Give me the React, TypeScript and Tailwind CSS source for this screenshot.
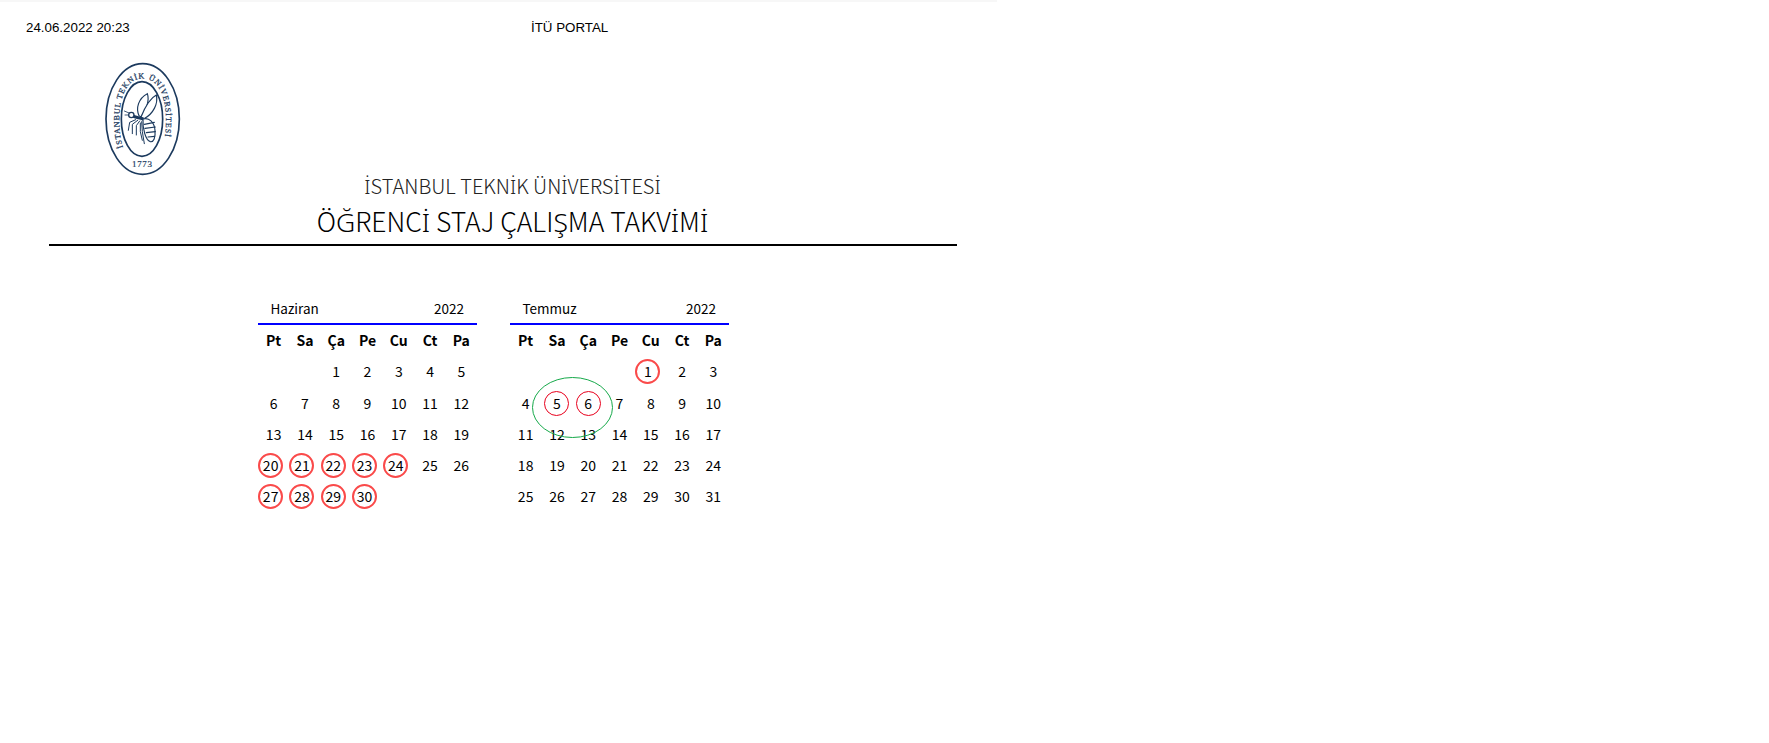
const pageFont = '"Noto Sans CJK JP", "Noto Sans", sans-serif';
const navy = "#1c3a5e";

type Mark = "red" | "thin";

type Month = {
  name: string;
  lead: number;
  days: number;
  marks: Record<number, Mark>;
};

const dayNames = ["Pt", "Sa", "Ça", "Pe", "Cu", "Ct", "Pa"];

const months: Month[] = [
  {
    name: "Haziran",
    lead: 2,
    days: 30,
    marks: { 20: "red", 21: "red", 22: "red", 23: "red", 24: "red", 27: "red", 28: "red", 29: "red", 30: "red" },
  },
  {
    name: "Temmuz",
    lead: 4,
    days: 31,
    marks: { 1: "red", 5: "thin", 6: "thin" },
  },
];

// the CJK font has no dotted capital I, so that one letter comes from Noto Sans
function Dotted({ text }: { text: string }) {
  const parts = text.split("İ");
  return (
    <>
      {parts.map((p, i) => (
        <span key={i}>
          {i > 0 && <span className="font-['Noto_Sans',sans-serif] font-light">İ</span>}
          {p}
        </span>
      ))}
    </>
  );
}

function Logo() {
  return (
    <svg width="140" height="150" viewBox="0 0 420 450" fill="none" className="block">
      <ellipse cx="191" cy="237" rx="110" ry="166" stroke={navy} strokeWidth="5" />
      <ellipse cx="189" cy="237" rx="62" ry="112" stroke={navy} strokeWidth="5" />
      <defs>
        {/* drawn as two halves so the arc's length is easy to reason about */}
        <path id="seal-arc" d="M132 322 C112 262 112 116 191 116 C270 116 270 262 250 322" />
      </defs>
      <text fontFamily='"Liberation Serif", serif' fontSize="24" fill={navy} stroke={navy} strokeWidth="0.8">
        <textPath href="#seal-arc" textLength="448" lengthAdjust="spacing">
          İSTANBUL TEKNİK ÜNİVERSİTESİ
        </textPath>
      </text>
      <text x="190" y="382" textAnchor="middle" fontFamily='"Liberation Serif", serif' fontSize="27" letterSpacing="2" fill={navy} stroke={navy} strokeWidth="0.6">
        1773
      </text>
      <g transform="translate(120 135)" stroke={navy} strokeLinecap="round">
        {/* wings */}
        <path d="M60 92 C50 70 58 40 85 26 C92 45 82 78 66 96 Z" strokeWidth="3.5" fill="#fff" />
        <path d="M66 96 C78 66 96 38 112 30 C118 55 104 86 74 102 Z" strokeWidth="3.5" fill="#fff" />
        {/* thorax */}
        <path d="M44 94 C52 98 62 98 72 102" strokeWidth="9" />
        {/* abdomen */}
        <path d="M72 102 C90 96 106 112 108 136 C110 158 104 172 94 170 C80 166 70 130 72 102 Z" strokeWidth="3.5" fill="#fff" />
        <path d="M76 118 L106 112 M78 130 L109 126 M82 143 L109 140 M87 156 L107 154" strokeWidth="3.5" />
        {/* head */}
        <circle cx="37" cy="90" r="8" strokeWidth="4" fill="#fff" />
        <path d="M30 84 L16 78 M28 90 L18 90" strokeWidth="2.5" />
        {/* legs */}
        <path d="M50 104 L32 112 L28 136 M56 106 L40 118 L40 146 M62 108 L52 122 L52 150 M68 110 L70 140 L76 176 M64 114 L64 140 L70 166" strokeWidth="3" />
      </g>
    </svg>
  );
}

function DayCell({ day, mark }: { day: number; mark?: Mark }) {
  if (mark === "red") {
    return (
      <div className="flex items-center justify-center">
        <span className="flex h-[25px] w-[25px] -translate-x-[3px] items-center justify-center rounded-full border-2 border-[#fa4a4a]">
          {day}
        </span>
      </div>
    );
  }
  if (mark === "thin") {
    return (
      <div className="flex items-center justify-center">
        <span className="flex h-[25px] w-[25px] items-center justify-center rounded-full border border-[#e8001c]">
          {day}
        </span>
      </div>
    );
  }
  return <div className="flex items-center justify-center">{day}</div>;
}

function MonthTable({ month }: { month: Month }) {
  const days = Array.from({ length: month.days }, (_, i) => i + 1);
  return (
    <div className="w-[219px] text-[14px] text-black">
      <div className="flex h-[25px] items-center justify-between border-b-2 border-[#0000ff] pr-[13px] pl-[12.5px] pb-[6px] text-[13.5px] leading-none">
        <span>{month.name}</span>
        <span>2022</span>
      </div>
      <div className="grid grid-cols-7 grid-rows-[31px_31px_32px_31px_31px_31px] items-stretch">
        {dayNames.map((d) => (
          <div key={d} className="flex items-center justify-center font-bold">
            {d}
          </div>
        ))}
        {Array.from({ length: month.lead }, (_, i) => (
          <div key={`lead-${i}`} />
        ))}
        {days.map((d) => (
          <DayCell key={d} day={d} mark={month.marks[d]} />
        ))}
      </div>
    </div>
  );
}

export default function App() {
  return (
    <div className="min-h-[743px] bg-white" style={{ fontFamily: pageFont }}>
      <div className="w-[997px]">
        <div className="h-[2px] bg-[#f7f7f7]" />

        {/* print header */}
        <div className="flex h-[50px] items-center pt-[2px] font-['Liberation_Sans',sans-serif] text-[13.33px] leading-none text-black">
          <div className="ml-[26px] w-[505px]">24.06.2022 20:23</div>
          <div>İTÜ PORTAL</div>
        </div>

        <div className="ml-[79px] -mb-[19px] -mt-[12px]">
          <Logo />
        </div>

        <div className="w-[1005px] pl-[20px] text-center text-black">
          <div className="text-[20px] leading-[30px] font-light text-[#222]">
            <Dotted text="İSTANBUL TEKNİK ÜNİVERSİTESİ" />
          </div>
          <div className="text-[26.5px] leading-[38px] font-light">
            <Dotted text="ÖĞRENCİ STAJ ÇALIŞMA TAKVİMİ" />
          </div>
        </div>

        <div className="ml-[49px] mt-[3px] h-[2px] w-[908px] bg-black" />

        <div className="mt-[54px] ml-[258px] flex gap-[33px]">
          {months.map((m) => (
            <MonthTable key={m.name} month={m} />
          ))}
        </div>
      </div>

      {/* green hand-drawn ring laid over the July table */}
      <svg className="absolute left-[530px] top-[375px]" width="86" height="65" fill="none">
        <ellipse cx="42.5" cy="32.5" rx="40" ry="30" stroke="#16a94a" strokeWidth="1" />
      </svg>
    </div>
  );
}
